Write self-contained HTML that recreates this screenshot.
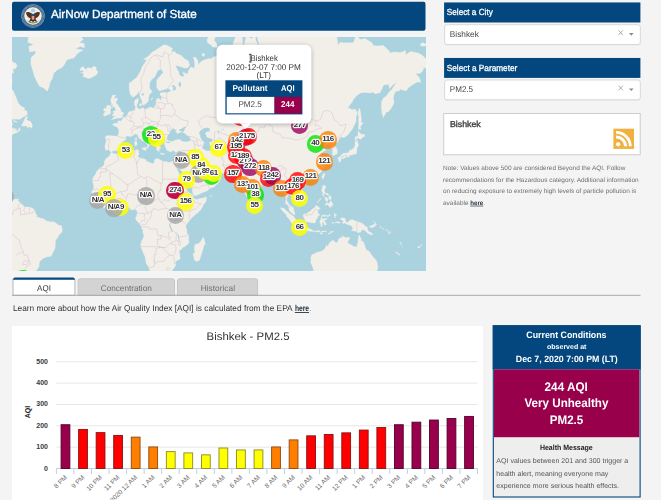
<!DOCTYPE html>
<html><head><meta charset="utf-8"><title>AirNow Department of State</title>
<style>
*{box-sizing:border-box;margin:0;padding:0}
html,body{width:661px;height:500px;overflow:hidden;background:#f4f4f4;font-family:"Liberation Sans",sans-serif;color:#333}
.abs{position:absolute}
svg.txt{filter:blur(.28px)}
svg.txt text{font-family:"Liberation Sans",sans-serif;text-rendering:geometricPrecision;white-space:pre}
#hdr{left:12px;top:1.8px;width:413.6px;height:29px}
#map{left:12px;top:37px;width:413.5px;height:234.3px;background:#aad3df;overflow:hidden}
#map svg.land{position:absolute;left:0;top:0;filter:blur(.35px)}
.mk{position:absolute;width:17.4px;height:17.4px;border-radius:50%;display:block}
.ml{position:absolute;width:30px;height:10px;text-align:center;font-size:8px;line-height:10px;font-weight:bold;color:#333;letter-spacing:-.5px;white-space:nowrap;text-shadow:0.0px 0.0px .7px #fff,1.0px 0.0px .7px #fff,-1.0px 0.0px .7px #fff,0.0px 1.0px .7px #fff,0.0px -1.0px .7px #fff,0.8px 0.8px .7px #fff,-0.8px -0.8px .7px #fff,0.8px -0.8px .7px #fff,-0.8px 0.8px .7px #fff,1.3px 0.0px 1px #fff,-1.3px 0.0px 1px #fff,0.0px 1.2px 1px #fff,0.0px -1.2px 1px #fff,0 0 1.5px #fff}
#popsh{left:217px;top:45px;width:94px;height:78px;border-radius:6px;box-shadow:0 1px 5px rgba(0,0,0,.32)}
#tip{left:239.8px;top:123.3px;width:0;height:0;border-left:5.7px solid transparent;border-right:5.7px solid transparent;border-top:5.6px solid #fff}
.sh{left:444.1px;width:196.4px;height:20.1px;background:#03477e}
.sel{left:444.1px;width:196.7px;height:20.8px;background:#fff;border:1px solid #d2d2d2;border-radius:2.5px;box-shadow:0 .5px 1px rgba(0,0,0,.1)}
.sel .x{position:absolute;left:172.6px;top:-.8px;font-size:9px;line-height:19px;color:#8a8f96}
.sel .a{position:absolute;left:184.3px;top:8.5px;width:0;height:0;border-left:2.7px solid transparent;border-right:2.7px solid transparent;border-top:3px solid #7c7c7c}
#city{left:443.2px;top:113px;width:197.5px;height:42.4px;background:#fff;border:1px solid #cdcdcd}
.tab{top:278.2px;height:17.6px;background:#d3d3d3;border:1px solid #c6c6c6;border-bottom:none;border-radius:3px 3px 0 0}
#tabline{left:12px;top:295px;width:628.5px;height:1px;background:#a9a9a9}
svg.chart{position:absolute;left:12px;top:325.5px}
svg.chart text{font-family:"Liberation Sans",sans-serif}
.yl{font-size:7px;font-weight:bold;fill:#3a3a3a}
.xl{font-size:6.6px;fill:#6c6c6c}
.yt{font-size:7px;font-weight:bold;fill:#222}
#cc{left:492.6px;top:325.2px;width:148px;height:172.4px;background:#eee;border:1px solid #03477e;border-left-width:1.4px}
#cc .b1{position:absolute;left:0;top:0;width:100%;height:44px;background:#03477e}
#cc .b2{position:absolute;left:0;top:43.6px;width:100%;height:67.8px;background:#99004c}
</style></head><body>

<svg class="abs" style="left:0;top:0" width="661" height="40" viewBox="0 0 661 40"><rect x="12" y="1.7" width="413.5" height="29.15" rx="2" fill="#03477e"/></svg>
<div id="hdr" class="abs">
<svg class="abs" style="left:9.2px;top:2.2px" width="24" height="24" viewBox="-12 -12 24 24">
<circle r="11.75" fill="#b9a75a"/><circle r="11.25" fill="#2d62b0"/><circle r="10.1" fill="none" stroke="#8fa9d4" stroke-width="1.1" stroke-dasharray=".7 .6"/>
<circle r="8.9" fill="#c4b35f"/><circle r="8.5" fill="#f1efe4"/>
<circle cx="0" cy="-5.3" r="2.1" fill="#a9cdea"/>
<path d="M-7,-3.4 C-5.6,-4.6 -3.2,-4.2 -1.2,-2.4 L0,-3.4 L1.2,-2.4 C3.2,-4.2 5.6,-4.6 7,-3.4 C6.8,-0.6 5,1.6 2.4,2.6 L4.2,6 L1.2,5 L0,6.6 L-1.2,5 L-4.2,6 L-2.4,2.6 C-5,1.6 -6.8,-0.6 -7,-3.4Z" fill="#4e3722"/>
<path d="M-6.3,4.2 C-4.5,6.6 -2,7.4 0,7.4 C2,7.4 4.5,6.6 6.3,4.2 C4.5,5.8 2,6.4 0,6.4 C-2,6.4 -4.5,5.8 -6.3,4.2Z" fill="#4d8a4a"/>
<rect x="-1.7" y="-1.4" width="3.4" height="1.5" fill="#2b4a9b"/><path d="M-1.7,0.1 H1.7 V2.2 C1.7,3.2 0.8,3.8 0,4.1 C-0.8,3.8 -1.7,3.2 -1.7,2.2Z" fill="#d0444c"/>
<rect x="-0.9" y="0.1" width="0.5" height="3.4" fill="#f3efe6"/><rect x="0.4" y="0.1" width="0.5" height="3.4" fill="#f3efe6"/>
<circle cx="0" cy="-2.9" r="1.05" fill="#f6f3ea"/>
</svg>
</div>

<div id="map" class="abs">
<svg class="land" width="413.5" height="234.3" viewBox="0 0 413.5 234.3">
<path d="M99.3,115.3L98.1,114.3L97.0,112.8L93.6,113.2L92.8,109.6L94.1,104.1L93.1,100.1L95.3,98.5L99.2,98.7L102.3,98.9L105.7,99.2L106.7,96.1L106.7,92.5L105.0,89.9L101.3,88.6L100.7,87.1L103.7,86.1L105.4,86.6L106.0,84.0L106.5,83.8L108.9,84.3L111.7,80.6L113.6,79.8L115.4,77.7L116.6,74.9L120.3,73.8L122.9,73.2L123.3,72.4L123.1,69.5L122.3,67.5L122.3,64.8L123.1,62.9L126.5,61.1L126.1,64.8L125.8,66.0L124.8,67.8L125.3,69.8L125.8,71.0L127.0,72.3L129.0,71.7L131.1,70.4L132.7,72.4L135.5,71.4L138.8,69.8L140.0,71.0L142.0,70.7L144.0,67.2L143.9,64.8L144.7,62.0L146.6,60.9L148.2,63.2L149.1,63.1L149.7,59.0L148.1,58.2L148.1,56.3L150.2,55.4L155.6,55.4L159.3,53.9L156.8,51.6L153.8,52.1L150.6,53.1L147.2,54.1L145.9,52.3L144.5,49.9L144.9,42.7L147.4,39.9L151.2,35.4L149.7,32.2L145.9,33.2L144.4,36.6L142.7,40.1L140.0,42.3L137.8,45.3L137.5,51.2L140.2,54.3L139.0,55.9L137.2,57.9L136.7,61.1L136.2,64.5L134.8,65.8L132.7,67.6L130.8,68.2L130.5,67.5L130.0,66.1L130.1,64.3L128.6,61.1L127.5,57.2L126.6,53.9L126.0,56.3L125.4,56.9L122.1,59.8L120.5,60.1L118.1,57.1L117.4,52.3L117.1,50.2L117.2,46.0L119.1,44.9L121.6,42.7L124.6,40.5L126.6,37.4L128.8,33.4L130.3,29.3L132.8,25.9L134.7,22.8L131.3,22.4L136.3,19.2L140.4,14.9L143.9,13.0L148.4,10.0L151.9,7.7L155.6,8.4L160.6,11.5L159.1,14.9L162.3,14.4L164.8,16.8L169.0,18.2L172.3,21.5L176.5,24.1L177.7,28.0L175.7,31.0L172.3,31.0L167.3,29.3L164.0,28.5L163.0,26.8L164.8,31.4L167.0,35.4L167.0,37.4L169.8,39.7L172.3,39.3L170.7,35.0L173.2,36.2L175.7,37.0L176.5,33.4L179.1,29.7L182.4,31.4L182.7,27.2L182.1,22.8L181.1,20.1L184.1,20.5L185.8,23.7L186.6,27.6L189.1,24.6L192.4,22.8L197.5,21.5L199.2,21.9L200.8,20.1L205.9,18.7L209.2,21.0L210.0,15.9L209.5,13.5L215.9,16.8L220.1,18.7L222.6,21.0L224.3,18.7L220.9,15.4L220.6,11.0L221.3,5.8L223.4,0.4L225.1,-2.4L230.1,-1.3L230.8,7.4L230.3,15.9L231.6,15.9L232.1,7.4L234.3,-1.3L239.4,1.5L243.5,-1.8L243.7,3.2L247.7,10.5L248.6,10.5L246.1,4.2L244.4,-5.3L254.4,-14.6L276.2,-24.8L282.9,-33.8L296.3,-24.8L298.0,-8.3L292.9,-7.7L287.1,-3.0L288.8,-2.4L298.8,-5.3L299.7,-5.9L309.7,-2.4L316.4,-5.9L321.4,-5.3L324.8,0.4L326.4,8.4L328.1,5.3L331.5,5.8L336.5,5.8L341.5,5.8L343.2,0.4L344.9,-1.3L348.2,2.6L353.2,1.5L359.9,5.8L361.6,8.4L365.0,8.9L371.7,8.4L376.7,13.5L378.4,15.9L381.7,14.9L388.4,15.4L393.4,13.5L394.0,18.2L395.1,16.8L398.5,14.4L403.5,15.4L406.9,16.3L410.2,18.2L415.2,22.8L418.6,25.9L423.6,27.2L427.5,31.0L425.3,33.4L421.9,37.8L416.9,33.8L411.9,30.1L411.0,33.4L408.5,36.2L406.0,36.6L403.5,36.2L407.7,41.2L408.9,45.3L405.2,44.9L401.0,47.4L396.8,50.6L394.0,53.9L388.4,52.3L386.8,54.3L384.2,53.9L382.2,56.9L381.4,60.7L382.1,65.7L380.2,69.8L376.7,74.4L374.5,74.9L371.2,80.6L370.0,76.3L369.3,70.7L369.5,64.8L371.3,61.1L374.2,59.2L376.4,55.9L379.9,52.3L382.9,47.8L384.4,44.9L380.9,48.1L377.4,51.6L376.7,47.4L371.7,48.1L368.3,55.6L363.3,56.9L361.3,55.3L357.4,55.9L352.4,55.6L348.6,55.9L344.9,58.5L341.5,62.3L340.2,65.1L336.5,69.8L335.7,70.4L339.0,72.1L339.9,72.7L343.2,72.1L344.4,74.6L345.4,74.4L344.9,77.7L344.0,80.4L344.0,84.3L343.7,85.6L341.5,89.4L340.7,91.8L338.2,94.7L336.0,97.8L333.2,100.1L331.3,100.5L329.6,99.8L327.6,101.7L326.1,103.2L325.9,105.0L323.1,106.8L322.4,107.2L322.2,108.5L323.8,110.0L324.9,111.7L325.4,114.3L325.4,115.3L324.9,117.1L323.1,117.8L320.6,118.6L320.3,117.8L320.6,115.3L320.3,113.6L320.8,112.2L318.9,111.5L317.9,110.7L318.6,109.6L318.1,107.9L317.1,107.0L314.7,107.7L312.4,109.2L311.7,107.9L313.4,105.5L311.4,104.8L309.0,107.0L306.0,109.0L306.4,110.7L308.0,111.5L308.0,112.8L310.2,111.9L312.0,111.9L313.9,112.4L313.7,113.4L310.4,115.1L308.5,117.1L308.5,118.0L310.2,119.4L311.2,121.8L312.9,124.0L312.9,125.5L311.2,126.5L312.9,127.5L312.4,130.2L311.2,131.1L309.0,134.9L306.5,137.7L304.2,139.9L300.0,141.7L298.8,142.0L295.8,142.9L293.6,143.7L293.3,145.3L292.4,144.0L291.4,143.1L289.6,142.9L287.6,144.4L285.9,147.0L285.9,148.1L287.3,150.2L289.1,152.0L290.1,152.7L291.3,155.4L291.8,156.7L291.9,158.7L291.6,159.9L289.8,161.6L288.1,162.6L287.4,163.8L284.2,165.5L284.4,163.5L284.7,163.2L283.7,162.5L282.1,162.1L281.2,160.6L280.4,159.4L278.4,158.6L277.7,157.3L277.0,157.0L276.2,157.5L276.0,158.9L275.9,160.1L274.9,162.3L275.0,164.4L276.2,165.7L277.2,167.9L278.4,168.4L280.1,169.6L281.6,171.1L281.9,173.6L282.7,176.0L283.2,177.7L282.6,177.8L281.9,177.7L279.9,176.3L278.4,175.0L277.2,173.0L276.7,170.9L276.4,169.1L275.9,168.4L275.0,167.4L273.4,166.6L273.4,164.9L273.9,163.2L273.9,159.1L273.0,156.3L272.2,154.1L272.2,152.0L271.2,151.1L270.0,152.0L268.3,153.2L266.7,152.8L267.0,150.2L266.7,148.5L265.6,146.7L264.3,145.6L262.8,143.3L262.5,141.7L260.8,141.3L259.4,142.4L257.8,142.8L256.9,142.9L256.1,142.4L254.4,143.3L253.9,145.3L252.4,146.2L251.1,147.0L248.2,149.9L246.6,151.3L244.5,152.8L243.2,153.7L242.9,155.6L243.2,157.9L242.4,159.9L242.4,162.7L241.0,164.4L239.7,165.2L238.6,166.4L237.5,165.7L236.3,163.3L235.7,161.0L234.0,158.2L232.3,153.9L231.5,151.1L230.6,147.8L230.5,145.8L230.5,143.8L230.1,141.8L229.6,142.6L227.6,144.4L226.6,144.2L225.3,142.9L224.3,141.8L226.3,140.6L224.8,140.8L223.1,139.3L221.8,138.8L220.8,137.1L220.1,136.0L216.9,136.4L213.1,136.5L210.2,136.2L205.5,135.5L204.2,133.9L203.0,132.7L200.7,133.8L196.8,132.1L193.8,129.4L192.8,127.3L191.1,126.5L190.1,127.4L189.1,128.4L189.8,130.0L190.4,131.7L191.9,133.0L192.7,134.0L192.8,135.4L193.8,137.1L193.8,135.6L194.5,134.7L195.1,136.2L195.1,137.5L194.6,138.0L196.8,138.2L199.8,137.7L201.3,136.2L202.5,135.2L203.2,134.3L203.1,136.5L203.8,137.9L206.9,139.3L208.9,141.3L208.0,143.3L206.9,145.1L205.5,147.6L205.3,146.4L204.2,147.8L203.0,149.5L201.2,150.2L199.2,151.1L196.1,152.5L196.1,153.5L190.9,155.4L188.3,156.8L184.1,158.4L181.6,158.6L181.1,157.5L180.6,154.9L180.2,152.8L180.0,151.3L177.5,147.4L175.7,145.3L174.3,143.1L172.4,138.4L171.0,136.2L169.8,134.5L168.2,132.1L166.7,131.1L167.3,128.2L166.2,131.6L165.0,130.5L164.0,129.2L163.2,127.4L162.8,124.8L165.3,125.0L166.3,124.4L166.9,123.3L167.3,121.8L168.2,119.6L168.7,118.5L168.7,116.3L169.3,114.0L168.2,114.0L166.7,113.6L165.1,115.0L163.6,115.2L162.3,114.1L160.1,113.5L159.8,114.7L157.6,114.7L156.0,113.6L154.6,113.2L154.3,111.9L153.8,110.2L152.8,110.5L153.8,109.0L152.4,107.9L152.6,106.8L152.3,105.2L152.1,104.9L149.6,104.8L149.4,106.5L148.4,106.9L147.7,106.2L147.1,105.5L146.6,106.8L147.2,108.3L147.7,109.2L148.9,110.7L149.0,111.7L148.2,111.2L147.2,111.3L147.6,112.4L146.7,112.2L147.4,114.4L146.4,114.5L145.7,113.2L145.0,113.6L144.4,111.8L145.0,110.6L144.0,110.3L143.5,109.1L142.5,107.7L142.2,107.1L141.3,105.8L141.3,103.9L141.2,102.7L140.7,102.1L139.0,100.9L136.3,98.9L134.2,97.5L133.7,95.4L132.9,94.7L131.9,95.8L131.4,94.2L131.7,93.9L130.6,93.9L129.4,94.5L129.6,95.7L129.3,96.8L129.8,97.6L131.3,98.7L132.5,101.3L135.8,102.6L135.3,103.5L136.9,104.4L138.8,105.4L139.7,106.5L139.4,107.2L138.8,106.7L137.5,105.8L136.5,107.2L137.4,108.7L136.4,109.7L135.7,111.2L134.9,110.9L135.2,109.7L135.8,109.0L135.0,106.8L133.4,105.4L132.6,104.9L131.4,104.1L129.8,103.6L128.5,102.1L127.3,101.4L126.3,100.2L126.0,98.8L125.1,97.5L123.6,96.8L122.9,97.1L122.1,98.0L120.9,98.5L118.6,99.8L117.7,99.4L116.4,99.2L115.2,98.8L113.9,99.8L113.8,101.2L114.2,101.7L112.4,103.7L110.8,104.4L110.1,105.2L108.7,106.9L108.2,108.0L109.0,109.5L107.9,110.3L107.0,111.9L105.0,113.8L104.6,113.5L102.8,113.8L101.3,113.8L99.7,115.0ZM98.8,115.7L99.8,115.5L102.2,116.8L103.8,116.7L105.4,117.1L107.6,115.9L108.9,115.3L110.9,114.3L113.8,113.6L115.4,113.4L117.2,113.7L118.3,113.6L120.3,113.4L121.7,113.4L123.1,113.3L125.2,112.6L126.0,113.5L127.2,113.1L126.5,114.5L126.5,115.7L127.2,116.3L126.7,118.0L125.6,119.6L127.3,120.4L128.0,121.1L130.8,121.6L132.7,122.2L134.0,122.6L134.5,124.4L136.5,124.9L138.8,125.9L140.9,126.8L142.4,125.3L142.3,123.2L143.5,122.1L144.9,121.6L146.6,121.9L148.9,123.2L150.7,123.9L150.8,124.3L154.3,124.7L157.2,125.6L158.8,124.9L159.6,124.5L160.6,124.2L162.0,124.4L162.8,124.8L163.2,127.4L162.9,128.1L163.4,129.0L164.1,130.4L165.3,132.5L165.6,133.5L166.2,134.7L167.2,136.6L168.2,138.8L168.3,140.4L170.1,141.8L171.0,144.0L171.0,146.5L171.3,147.4L173.4,149.3L174.8,153.5L176.0,154.8L178.5,156.5L180.3,158.0L181.2,158.9L181.0,160.4L181.5,160.9L184.1,162.4L186.6,161.9L188.3,161.3L191.1,160.9L193.8,159.9L194.6,160.0L194.3,162.4L194.0,164.0L193.3,165.7L192.2,166.6L191.1,168.6L190.0,171.0L188.3,173.3L186.6,175.1L184.7,176.6L183.7,177.2L181.6,179.2L180.0,180.6L178.4,182.8L177.2,183.9L175.9,185.4L175.1,186.8L174.2,188.5L173.7,190.1L174.5,191.4L174.9,193.3L174.9,195.0L175.2,196.8L176.0,197.3L176.8,198.0L176.6,202.0L176.9,204.6L177.0,205.5L175.5,207.6L173.2,209.3L170.7,210.5L169.5,212.2L167.1,213.9L167.3,215.5L167.8,217.8L168.2,221.2L167.7,222.3L165.1,223.5L163.3,225.0L163.8,226.7L163.1,229.6L162.5,230.4L160.7,232.4L159.3,234.8L155.4,238.6L151.7,240.6L142.2,242.2L139.5,241.3L138.7,238.6L139.4,236.8L138.0,233.7L136.9,231.3L136.3,230.0L134.1,226.3L133.7,223.3L133.0,219.5L131.1,215.5L130.0,212.4L128.4,209.3L129.1,205.8L129.6,203.7L131.1,201.3L131.4,200.8L131.9,198.9L130.8,194.8L131.1,192.6L130.2,192.2L129.3,190.2L129.1,189.3L128.5,188.0L126.5,185.7L124.3,183.2L123.4,181.2L124.5,179.3L124.8,178.3L125.0,176.9L125.3,175.1L124.9,173.3L123.8,173.3L123.6,172.3L122.6,172.4L120.4,172.7L118.9,172.8L117.7,171.3L117.1,170.3L114.4,169.3L112.7,169.3L110.7,169.8L108.4,170.7L105.2,172.0L102.0,171.2L98.5,171.7L95.8,172.7L93.5,171.6L90.6,169.4L89.4,168.4L87.8,167.6L86.5,165.7L85.8,164.0L84.2,162.3L83.4,161.5L81.9,160.1L80.6,159.1L80.9,157.3L80.6,156.3L79.4,155.1L80.4,153.7L81.1,152.8L81.9,149.2L81.0,146.9L81.1,144.7L80.1,144.4L80.4,142.9L82.0,139.1L83.7,137.3L84.4,134.7L86.3,132.8L87.0,131.2L89.7,130.2L91.6,128.4L92.5,126.5L92.1,126.0L92.3,124.4L93.2,122.8L94.5,120.9L96.0,120.2L97.2,119.3L97.6,118.8L98.4,116.9ZM99.2,82.9L101.7,82.1L102.8,82.0L103.7,81.2L104.6,81.6L106.5,81.0L108.5,80.9L110.3,80.6L111.0,80.0L111.0,79.4L109.5,79.0L110.4,78.2L111.4,77.4L111.6,76.3L110.9,75.1L109.2,75.2L109.3,74.4L108.9,73.2L108.5,71.8L107.7,70.7L106.4,69.2L105.4,66.9L103.7,66.3L104.3,65.4L104.0,64.8L105.3,62.8L105.7,61.7L105.4,61.1L102.0,61.4L102.2,60.4L103.6,58.7L103.6,58.0L100.3,58.2L99.8,60.1L99.0,61.7L98.9,63.2L98.3,64.2L99.5,65.1L99.3,68.3L100.5,67.2L100.9,67.9L100.2,69.5L100.6,70.2L102.8,69.5L103.0,70.7L103.3,71.8L103.6,72.7L103.7,73.8L103.2,74.0L101.0,74.1L101.5,74.9L100.7,75.5L101.8,75.2L101.8,76.6L100.8,77.4L99.8,78.0L100.2,78.6L102.1,78.8L103.4,79.2L104.2,78.8L104.1,79.0L103.5,79.8L101.8,79.8L101.1,80.9L100.2,82.0ZM96.3,68.2L98.5,68.6L99.2,70.2L99.6,71.1L98.1,72.1L98.5,74.0L98.7,75.1L98.1,77.2L97.0,77.3L94.8,78.2L92.3,79.2L91.4,78.1L91.2,77.4L92.1,76.2L93.6,74.5L91.6,73.8L91.8,72.1L92.1,71.3L94.3,71.3L95.0,70.4L94.0,70.1L94.8,68.8ZM67.7,33.4L68.8,31.0L70.8,29.5L73.0,31.8L74.7,33.0L74.9,31.0L77.7,30.8L79.4,31.4L81.4,29.3L84.1,30.1L84.2,33.0L85.9,34.6L85.2,37.0L83.2,38.5L80.2,40.3L77.2,41.6L74.7,41.0L72.7,39.9L70.7,39.9L71.8,38.2L71.3,36.2L68.5,36.0L71.8,35.0L71.0,33.6ZM35.2,54.3L31.7,50.9L27.5,49.2L25.0,44.9L22.4,39.3L20.8,33.4L18.8,27.2L19.1,20.5L23.3,16.8L23.6,13.9L17.4,14.9L16.9,9.5L21.6,7.4L15.7,5.3L16.6,-1.3L14.1,-8.3L10.7,-17.9L4.8,-22.7L-5.2,-21.3L-11.9,-36.2L8.2,-75.3L58.5,-95.3L78.5,-64.0L76.9,-36.2L76.0,-14.6L72.7,-8.3L71.0,-3.6L67.7,-1.3L71.3,2.1L67.7,5.8L72.2,6.4L72.4,11.0L68.5,9.5L63.5,11.5L70.2,13.0L71.3,13.0L66.0,15.9L61.8,21.0L55.1,22.8L52.6,27.2L50.1,30.6L45.9,32.6L41.7,36.2L40.5,41.2L38.3,44.9L37.0,50.2ZM205.0,10.5L200.8,10.0L198.3,7.4L195.5,5.8L195.1,2.6L197.5,-2.4L200.0,-5.9L202.5,-11.4L206.7,-17.9L214.2,-23.4L222.6,-28.5L224.3,-24.8L217.6,-19.9L210.9,-14.6L206.7,-8.3L204.2,-2.4L202.2,3.2L205.0,7.4ZM189.6,18.2L191.3,15.9L193.0,17.8L191.6,19.6ZM407.9,7.9L410.2,5.6L413.9,6.9L413.6,8.9L410.2,9.2ZM129.6,111.5L131.1,110.7L134.8,110.5L134.0,112.2L134.1,113.8L132.5,113.1L130.3,112.0ZM122.4,104.8L124.1,104.0L125.1,105.7L124.8,108.5L123.9,108.5L122.8,109.1L122.8,107.0L122.4,105.5ZM124.4,100.1L124.7,102.1L124.1,103.7L123.1,102.6L123.1,101.4L124.3,100.8ZM148.1,116.2L149.2,116.1L150.9,116.6L152.8,116.7L152.6,117.3L150.2,117.4L148.1,116.8ZM162.8,117.2L163.8,116.5L165.1,116.5L166.7,115.9L165.7,117.3L164.0,118.2L163.0,117.9ZM242.5,163.5L244.2,165.0L244.7,165.5L245.8,167.6L245.5,169.1L243.7,170.0L242.9,169.8L242.4,168.3L242.3,166.2L242.5,164.9ZM290.8,147.2L292.1,145.8L294.0,145.6L294.6,146.5L293.8,147.9L292.3,149.0L290.8,148.5ZM312.3,136.2L313.1,136.7L312.4,138.6L311.2,142.2L310.0,140.8L309.9,139.3L311.2,137.1ZM328.0,119.5L329.3,120.2L329.6,121.6L328.8,123.8L328.3,124.8L327.6,125.3L326.8,124.8L326.8,123.0L326.1,122.0L325.8,120.8L327.1,120.2ZM330.0,120.6L331.0,119.5L333.2,118.7L334.3,119.4L334.4,119.8L333.5,120.9L332.3,120.4L331.5,121.9L330.5,121.4ZM328.0,119.4L328.8,118.5L330.8,116.4L331.6,116.2L333.5,116.2L335.2,115.8L336.6,116.0L336.7,114.7L337.7,113.4L338.7,112.2L338.2,113.6L338.5,113.7L341.5,111.2L342.4,110.0L342.9,109.2L343.2,107.4L342.9,105.5L343.8,104.0L344.5,104.9L344.9,103.5L345.6,103.7L345.8,105.6L346.6,107.7L345.7,110.5L345.0,110.6L344.9,113.2L344.6,115.9L343.9,117.0L342.9,117.6L342.9,116.1L342.6,117.0L341.8,116.8L341.3,118.2L340.8,117.1L340.2,118.2L339.3,118.1L338.2,118.2L337.9,117.2L337.4,118.2L338.0,118.9L336.9,119.6L336.1,120.5L335.0,119.4L335.1,118.9L335.5,118.1L335.2,118.0L333.1,118.3L330.6,118.7L329.5,119.4ZM343.4,103.7L344.8,102.9L343.9,101.2L344.9,101.7L345.9,101.0L348.6,102.5L350.6,100.2L352.9,99.3L352.1,97.1L350.4,97.6L348.8,96.9L346.5,94.2L346.0,94.5L346.1,96.6L346.0,97.9L345.5,99.5L343.8,99.3L342.9,101.0L342.9,102.1ZM347.6,71.0L348.2,73.5L348.7,76.3L349.2,80.4L349.6,83.0L348.6,85.1L351.1,85.8L348.2,89.9L348.9,91.6L348.9,92.8L347.9,91.4L346.6,93.3L346.4,90.6L346.7,86.9L346.6,83.5L346.8,80.6L346.0,77.1L346.4,73.8ZM310.7,148.5L313.4,148.5L313.7,150.6L312.4,153.0L312.5,155.1L313.6,156.1L316.2,156.7L316.7,158.8L315.2,158.0L313.9,157.0L312.9,156.5L311.4,156.9L310.7,156.0L311.3,155.4L310.5,155.5L309.5,153.2L310.1,152.8L309.4,152.3L310.3,151.8L310.3,150.0ZM310.4,157.3L311.7,157.3L312.2,158.7L311.5,159.4L310.9,158.4ZM316.9,158.9L318.6,158.8L319.3,161.3L318.4,162.7L318.1,163.2L317.7,162.8L317.1,161.6L316.9,160.6ZM312.9,159.9L314.9,160.5L314.1,162.4L313.0,162.4L313.1,160.9ZM314.5,161.6L315.6,161.6L316.5,161.0L315.4,164.0L315.2,164.8L313.7,163.7L313.8,162.5ZM318.7,163.5L320.3,165.7L320.8,167.7L320.1,169.4L319.2,168.4L318.7,170.6L316.7,169.6L316.6,167.9L315.4,167.6L313.1,168.4L313.2,166.9L315.2,165.5L316.1,166.4L316.7,166.2L317.5,165.7L318.1,164.9ZM308.9,160.9L308.5,162.3L307.6,163.6L305.0,166.0L305.5,165.0L307.2,163.2L308.4,161.1ZM292.4,176.6L293.6,177.2L295.3,176.0L298.0,174.6L299.7,172.6L301.3,171.6L303.1,169.9L304.3,168.2L305.8,169.3L306.5,170.2L308.4,171.3L306.2,172.9L305.7,174.5L306.4,176.3L308.0,178.3L306.2,178.7L305.5,181.0L304.3,182.2L303.8,184.2L303.0,186.0L300.5,185.9L298.0,185.4L295.8,184.9L293.3,184.9L292.9,183.1L291.6,180.0L291.1,178.0ZM268.3,170.7L272.0,171.2L273.4,172.6L274.0,173.6L276.0,175.0L277.5,176.5L278.6,177.2L279.9,178.3L281.9,179.2L282.6,181.5L283.6,181.7L284.4,183.9L285.6,184.0L286.2,185.0L286.0,187.0L286.0,189.7L285.1,189.2L283.4,189.2L280.0,186.4L276.8,181.6L274.7,179.5L274.1,177.1L272.4,176.1L269.7,173.0ZM284.9,191.4L286.2,189.9L287.6,190.2L290.1,190.6L290.6,191.2L293.6,191.7L294.6,190.7L297.3,191.6L300.4,193.0L300.3,193.8L300.5,194.7L297.5,194.1L294.1,193.8L291.3,193.0L290.4,193.1L287.1,192.4L287.1,191.8ZM300.5,193.6L302.5,193.8L301.7,194.8L300.7,194.1ZM303.0,194.1L304.2,194.0L303.8,195.0L302.8,194.8ZM304.3,194.1L306.4,193.6L308.4,194.1L308.0,194.8L306.0,195.0L304.3,195.1ZM309.5,194.1L312.2,194.1L314.7,193.8L314.4,194.6L311.4,195.0L309.5,194.8ZM308.0,195.8L309.7,195.6L311.0,196.8L309.7,197.2L308.2,196.5ZM315.6,197.3L317.2,195.5L319.8,194.3L321.9,194.1L320.6,195.1L318.1,196.5L316.4,197.3ZM309.4,181.2L309.4,179.7L309.9,178.7L311.1,177.8L312.2,178.2L314.4,178.4L316.4,178.4L317.9,177.2L318.5,177.6L317.2,179.2L315.2,179.5L314.8,179.2L312.2,179.2L310.2,179.2L309.8,180.7L310.7,181.7L311.0,182.3L312.4,181.5L314.4,181.4L315.5,181.4L314.4,182.7L313.1,182.8L312.2,183.4L312.9,184.7L313.9,185.5L314.1,186.7L314.6,187.4L313.7,188.0L312.4,188.0L312.4,186.8L311.2,185.7L311.1,184.4L310.0,185.0L310.4,186.7L310.3,188.4L310.5,189.4L308.9,189.4L308.7,188.6L309.0,186.7L307.9,186.0L307.8,184.4L308.5,182.7L308.9,181.4ZM322.3,176.5L323.1,176.3L322.9,178.0L324.3,177.5L324.3,178.7L323.1,179.3L323.8,181.3L322.8,180.5L322.4,178.5ZM322.9,185.4L324.8,184.7L327.8,185.0L327.8,186.4L325.6,185.7L323.1,185.9ZM319.8,185.4L321.8,185.4L321.8,186.4L319.9,186.2ZM328.5,181.4L330.5,180.7L333.3,181.4L333.5,183.4L334.2,185.5L335.7,185.6L337.3,183.7L339.7,182.5L341.1,183.1L344.4,184.3L345.4,184.5L349.3,186.0L350.7,186.5L352.9,188.7L354.6,189.9L356.3,190.9L354.9,191.3L356.1,193.4L357.4,195.1L358.8,195.1L359.9,196.8L361.4,197.3L359.9,197.9L357.4,197.2L355.3,196.0L353.2,193.6L351.2,192.9L350.3,192.6L349.2,194.0L348.6,195.3L346.7,195.5L344.9,195.3L343.9,194.3L341.5,193.8L339.3,194.1L340.5,192.3L340.9,191.4L339.9,189.2L337.8,188.1L335.2,187.5L332.6,186.1L331.1,186.7L330.3,184.9L332.8,184.0L330.6,183.7L329.6,182.7L328.0,182.3ZM357.1,189.2L359.9,188.4L362.5,187.0L363.8,187.0L363.3,188.9L360.8,190.4L358.3,190.4ZM361.3,184.4L363.3,185.5L365.0,187.7L364.3,187.4L362.5,185.4ZM302.5,236.6L300.7,230.4L299.9,228.3L298.6,225.5L299.1,223.1L298.6,221.4L299.9,217.4L301.5,217.2L304.3,215.5L307.4,214.7L309.7,214.0L312.2,212.4L313.4,210.7L314.6,207.9L315.7,209.4L316.4,207.7L317.4,205.9L319.6,204.0L321.3,203.3L322.8,204.6L323.3,205.8L325.8,205.2L326.1,203.3L326.8,201.8L327.9,201.0L330.8,200.4L329.8,198.8L332.3,199.9L334.8,200.6L336.5,200.2L337.8,200.6L337.3,202.3L336.3,203.7L335.5,205.1L336.5,206.5L339.3,207.9L342.4,209.8L344.5,209.8L345.5,207.2L345.9,204.6L346.3,201.4L346.7,199.1L347.4,198.0L348.1,199.9L349.1,201.6L349.2,203.7L349.9,204.4L350.7,204.0L352.1,206.3L352.9,208.7L353.4,210.7L354.6,212.9L357.0,214.2L358.6,216.3L359.8,218.3L361.5,220.5L362.1,221.2L364.0,222.9L365.1,224.8L365.3,227.8L365.8,229.1L366.1,230.1L365.1,233.3L364.8,235.6L363.0,238.4L361.6,244.7L301.3,244.7ZM191.3,200.2L192.4,202.7L193.3,207.0L191.8,208.7L191.4,210.9L190.4,214.2L189.1,218.2L188.1,221.4L187.4,223.4L184.4,224.4L182.4,223.3L181.8,220.2L181.1,217.4L182.9,214.7L182.4,212.4L182.4,208.9L183.2,207.5L186.3,206.6L187.8,205.4L188.9,204.2L189.6,202.8L190.6,200.9ZM198.0,158.6L200.0,158.8L199.2,159.2L198.1,159.1ZM127.5,67.2L128.8,66.0L129.8,67.2L129.0,69.2L127.5,68.6ZM139.2,62.6L140.5,60.4L140.2,62.0L139.4,63.4ZM383.4,214.4L385.9,216.0L388.4,218.3L387.6,218.3L384.7,216.3ZM367.7,189.1L369.2,190.1L369.8,191.4L368.7,190.9ZM405.7,209.6L407.9,209.8L407.9,211.0L405.8,210.8ZM407.9,208.6L410.2,207.5L410.0,208.4L408.4,208.9ZM387.8,205.1L388.8,205.4L388.8,206.6L387.9,206.3ZM388.9,207.2L389.8,207.5L389.6,208.2L388.9,207.9ZM390.4,209.8L391.1,210.0L390.8,210.5ZM376.0,195.6L378.0,196.2L377.7,196.8L376.2,196.5ZM377.7,194.1L378.9,195.5L378.4,196.0L377.7,195.0ZM374.2,192.6L376.4,194.0L375.9,194.3L374.0,193.1ZM370.8,191.2L372.5,192.3L371.8,192.4L370.7,191.6ZM-16.9,161.5L-11.9,159.4L-10.7,161.5L-10.2,159.8L-8.5,159.2L-5.9,161.1L-1.8,162.1L0.7,162.8L3.2,162.0L4.8,162.1L6.5,164.0L8.2,165.7L10.7,167.9L12.9,169.9L16.6,170.1L18.2,170.3L20.8,171.4L22.4,172.8L23.8,176.6L25.0,178.5L24.4,180.0L27.5,180.5L28.3,181.2L31.7,181.8L34.2,183.7L35.8,184.2L39.2,184.9L41.7,184.7L44.2,186.2L46.4,188.0L49.6,188.7L50.2,191.8L50.2,194.0L49.2,196.0L46.7,198.5L45.2,201.6L43.5,202.8L43.4,206.3L43.2,210.3L42.2,213.3L40.9,215.6L40.0,217.8L38.3,219.5L35.0,219.8L31.1,221.4L28.3,223.8L27.3,226.1L27.1,229.5L25.0,232.7L21.6,236.6L19.1,240.6L11.5,244.7L-16.9,244.7ZM-16.9,46.7L-11.9,48.5L-8.5,50.2L-7.7,56.9L-4.4,59.2L-1.8,56.9L0.7,52.6L3.2,58.2L5.2,63.2L6.5,66.3L9.0,69.2L12.4,70.7L12.7,73.5L14.9,74.1L15.4,77.1L13.4,79.0L10.2,80.4L8.2,82.2L3.2,82.2L-2.7,82.5L-5.2,85.6L-0.2,85.1L1.0,86.9L-1.0,88.6L0.2,90.6L1.5,92.8L5.2,93.7L6.5,94.9L2.3,96.4L-1.5,98.7L-2.2,97.1L0.7,94.5L-3.5,95.4L-8.5,98.5L-16.9,106.8ZM9.4,89.1L11.5,88.9L14.9,89.1L15.2,90.8L17.9,89.6L18.9,91.4L20.4,89.4L19.9,86.9L18.6,84.6L15.4,83.3L14.7,82.5L15.7,78.8L13.4,80.4L11.7,84.0L11.0,86.1L9.7,87.9ZM5.9,94.0L7.5,90.6L8.5,93.0L6.7,94.2ZM0.8,91.3L4.8,91.9L3.8,93.0L1.5,92.3ZM0.7,83.3L4.8,84.6L5.4,85.3L2.3,84.8ZM-16.9,41.2L-11.1,43.1L-6.0,45.6L-1.8,47.1L0.2,44.5L-0.2,41.2L-4.4,39.3L-1.0,37.0L1.8,35.4L0.7,32.2L3.2,31.8L5.2,28.9L4.0,26.3L1.5,25.5L-2.7,21.0L-6.0,18.2L-4.4,13.9L-8.5,10.0L-16.9,3.2ZM5.0,163.0L6.7,163.0L6.7,161.7L5.4,162.0Z" fill="#f2efe9" stroke="#f2efe9" stroke-width=".3" stroke-linejoin="round"/>
<path d="M157.3,104.1L155.6,102.6L154.8,101.2L155.4,99.6L156.7,97.3L158.4,94.9L160.2,91.8L161.5,91.6L163.1,92.8L165.0,92.8L163.1,94.6L164.6,94.9L164.7,96.4L165.2,96.8L165.9,96.6L168.0,95.4L169.8,95.2L170.0,94.5L167.3,93.7L167.0,92.7L170.3,91.2L171.6,90.3L173.9,90.1L174.5,90.3L172.8,91.3L172.6,92.9L171.3,94.7L170.2,95.2L171.2,95.7L172.0,96.1L174.1,97.5L175.2,98.7L177.4,100.1L178.5,102.0L178.4,103.1L176.5,104.5L175.2,104.6L173.0,104.8L172.2,104.6L169.5,103.9L169.0,103.0L167.6,102.2L165.2,102.4L163.0,102.9L162.0,103.6L160.6,104.4L159.3,104.1ZM153.4,105.8L154.8,104.7L156.4,104.6L157.3,104.6L158.8,105.2L157.3,105.9L155.6,106.0L154.4,105.9ZM186.9,96.6L188.3,93.7L190.8,92.1L192.4,91.3L194.1,90.8L195.8,90.8L197.5,91.6L197.8,92.3L197.5,94.5L196.6,94.5L194.6,94.7L193.0,96.4L194.4,98.6L194.6,100.1L196.6,101.0L199.7,102.3L200.5,104.1L198.8,105.2L197.3,104.8L197.5,106.8L197.6,108.1L199.0,109.2L199.0,112.6L199.2,113.3L196.6,113.8L194.1,113.7L192.4,112.4L190.8,111.9L190.6,110.2L191.3,108.3L191.6,106.3L193.1,105.9L191.9,105.5L190.9,103.9L189.6,102.2L188.3,100.1L188.3,98.2ZM162.0,181.5L162.3,179.8L164.8,179.3L165.8,179.7L166.9,180.3L165.7,181.5L165.5,182.8L164.5,183.9L163.8,184.3L162.8,184.4L162.0,183.9L161.9,182.2ZM160.5,53.6L161.5,50.6L159.5,49.2L161.5,48.1L163.6,49.5L164.0,51.9L162.6,53.3ZM167.8,50.2L166.5,47.4L167.3,44.5L168.7,45.6L169.3,48.8ZM209.2,93.0L211.7,91.6L211.4,92.8L209.7,93.3ZM206.4,94.2L206.9,93.5L207.2,95.9L206.7,97.8L206.2,96.4ZM231.8,93.5L233.5,91.6L236.8,91.6L241.0,92.3L240.2,93.0L236.0,92.5L233.5,94.0L232.3,94.7ZM157.8,185.7L158.3,188.4L160.0,192.6L160.8,194.6L159.8,194.0L157.8,190.1L157.4,187.2ZM165.7,196.2L166.7,198.5L167.2,201.1L167.7,204.0L166.8,204.2L166.2,201.1L165.7,198.5L165.5,196.8ZM236.3,101.4L238.5,100.6L239.9,101.0L239.0,102.1L237.0,102.0ZM169.0,172.5L169.3,174.1L170.0,175.8L169.3,175.6L168.7,173.6ZM129.5,57.2L131.3,55.9L132.2,57.6L130.5,58.8Z" fill="#aad3df"/>
<path d="M105.0,117.1L105.9,120.4L106.7,122.8L102.7,125.3L99.5,127.5L94.2,129.8L94.2,132.4M94.2,131.7L86.6,131.7M94.2,132.4L94.2,134.9L88.6,134.9L88.6,139.6L86.9,140.4L86.8,143.5L80.2,143.5M94.2,132.4L100.7,136.7L110.7,143.8L111.7,145.3L114.1,146.2L114.2,147.6L115.8,147.3L118.4,146.7L121.3,144.2L128.8,139.5M128.8,139.5L125.3,137.1L125.4,133.8L124.6,126.9L123.9,123.2L121.3,119.8L122.6,116.9L123.1,113.4M124.6,126.9L126.0,124.0L128.0,121.1M150.8,124.2L150.6,128.8L150.6,142.2L150.6,145.8L148.9,145.8L148.9,146.7L135.5,139.6L133.8,140.4L132.5,141.1L128.8,139.5M150.6,142.2L170.5,142.2M100.7,136.7L97.6,136.7L99.3,152.0L99.5,153.7L93.1,153.7L90.8,153.9L89.4,153.5L88.3,154.9L86.3,152.7L84.4,151.8L81.1,152.8M115.8,147.3L115.7,151.3L114.7,153.7L110.4,154.6L109.0,154.6L105.4,156.0L101.5,157.7L99.5,162.5M133.8,140.4L134.7,144.0L134.8,149.3L134.7,151.3L131.3,155.4L131.5,156.8M114.7,160.3L115.6,157.2L118.8,156.8L122.9,158.0L126.3,157.5L131.5,156.8L132.5,159.1L133.2,160.6L134.7,163.2L132.0,163.8L134.7,167.4M132.5,159.1L130.8,163.2L128.6,168.1L125.6,168.4L123.1,172.0M148.9,146.7L148.9,153.4L147.1,153.7L146.4,156.3L145.2,158.6L147.1,161.5L145.0,162.1L140.5,164.9L139.9,166.6L134.7,167.4L133.0,170.1L135.8,176.3M173.4,149.3L170.7,151.1L169.7,154.6L169.8,155.8L172.2,154.8L175.7,155.4L179.7,158.9M169.8,155.8L169.2,158.6L167.5,160.1L166.2,162.1L165.8,164.0L165.5,165.7L164.0,166.7L165.7,168.4L167.8,170.9L168.8,172.3M147.1,161.5L148.1,164.9L149.7,165.2L151.9,162.5L155.6,164.2L158.9,162.7L162.3,159.8L164.3,159.4L164.0,162.8L165.5,164.0M149.7,165.2L154.6,171.4L150.6,171.8L146.4,173.1L141.4,171.4L139.9,174.1L138.5,180.8L135.8,183.4L134.3,187.2L130.5,187.7L129.1,188.4M154.6,171.4L158.1,172.6L160.5,174.1L161.0,176.3L158.8,179.0L158.3,182.3L159.8,181.7L160.3,184.0L157.9,187.4L158.3,190.9L160.3,194.0M160.5,174.1L165.7,173.0L168.8,172.3M180.7,161.5L180.6,161.6L182.4,164.9L187.4,166.6L189.1,166.6L184.1,171.6L179.1,173.3L174.9,174.3L172.5,174.0L169.0,172.5L168.8,172.3M179.1,173.3L177.4,175.3L177.4,181.5L178.4,182.8M165.7,173.0L166.3,173.8L167.3,177.2L165.7,179.7L165.5,181.7L171.8,185.2L174.4,187.9M165.5,181.7L159.8,181.7M167.2,199.6L169.8,199.7L173.2,199.1L176.4,197.7M129.3,190.1L130.5,189.9L136.5,189.9L137.2,192.3L141.4,191.8L145.2,192.3L145.4,196.2L146.1,198.9L148.9,198.4L148.9,202.0L145.6,202.0L145.6,207.5L147.9,210.0M148.9,198.4L151.1,199.2L154.3,199.9L157.3,202.7L158.6,200.6L156.3,200.2L156.6,195.6L160.3,194.0L163.8,195.8L165.7,196.0M128.4,209.3L132.2,209.6L139.5,209.6L147.9,210.0L150.9,210.3M150.9,210.3L147.2,210.7L143.9,211.2L143.9,217.8L142.2,217.8L142.2,222.9L142.2,229.6L137.8,230.2L136.3,230.0M142.2,222.9L143.5,226.6L146.7,224.2L151.4,224.6L153.8,220.9L157.9,218.2L161.1,218.5L162.3,222.3L162.3,226.6L163.8,226.7M150.9,210.3L152.6,213.3L155.1,215.1L157.9,218.2M150.9,210.3L153.9,210.7L157.1,207.2L159.6,206.5L163.8,208.4L164.0,212.4L163.0,216.5L161.1,218.5M159.6,206.5L159.3,205.1L164.3,203.7L164.0,201.1L164.5,198.2L163.8,195.8M164.3,203.7L166.5,204.6L168.8,205.2L167.8,208.6L166.3,207.7L166.2,204.4M127.3,186.5L128.6,186.0L130.1,183.4L132.8,183.7L133.0,181.0L132.0,179.7L133.0,177.7L131.0,176.3M125.1,176.1L127.6,176.3L131.0,176.3L135.8,176.3L139.9,174.1M153.9,231.9L156.4,230.0L157.9,231.6L155.6,233.9L153.9,231.9M88.3,154.9L89.6,159.1L93.6,159.1L95.3,162.8L98.7,162.3L99.5,162.5L104.0,163.8L104.2,166.6L103.3,169.9L103.5,171.4M104.0,161.5L108.7,161.5L109.5,165.7L110.7,169.8M109.0,154.6L110.4,158.0L112.7,159.8L114.7,160.3L113.4,164.9L113.2,169.3M110.2,161.5L111.4,164.9L111.5,169.4M96.1,172.6L94.6,169.1L94.8,167.2L93.0,167.6L91.4,165.7L89.4,168.2M91.4,165.7L90.9,164.4L89.9,163.2L87.8,163.3L86.4,164.9M89.6,159.1L85.8,158.7L85.8,160.3L83.6,161.5M85.8,158.7L80.7,159.2M80.6,157.0L83.6,156.7L85.6,157.3L83.6,157.7L80.6,157.9M166.1,124.8L167.2,128.2M167.3,128.2L168.2,124.4L168.3,122.0L168.7,120.8L170.0,119.0L169.0,118.1M168.7,122.0L170.3,122.8L173.7,120.6L174.4,123.1L170.7,124.4L172.3,126.3L171.5,127.3L169.0,128.8L167.3,128.5M169.0,115.5L170.2,113.6L172.3,113.6L175.7,113.6L179.6,113.0L183.7,112.9M179.6,113.0L177.7,115.3L177.4,118.6L173.7,120.6M183.7,112.9L185.8,115.7L184.7,119.4L185.9,121.4L188.9,123.8L189.1,126.3L190.1,127.4M174.4,123.1L176.4,123.6L179.1,125.1L183.6,128.8L186.6,129.0L188.1,127.1L189.1,127.3M186.6,129.0L188.3,129.2L189.8,130.2M183.7,112.9L182.7,110.5L182.4,108.1L183.7,107.4L181.9,106.6L181.6,104.4L179.9,103.5L178.2,103.5M175.7,99.2L179.9,99.6L183.2,100.8L186.4,102.6L188.8,104.1L190.1,102.8M181.6,104.4L184.1,103.9L186.4,102.6M184.1,103.9L184.9,105.0L186.6,109.2M183.7,107.4L186.6,109.2L189.1,107.7L190.6,110.2M180.4,152.1L181.2,150.2L183.2,150.4L187.4,151.1L189.1,149.0L195.8,147.6L200.8,145.8L202.0,142.2L201.2,140.9L196.8,140.6L195.1,138.2M195.8,147.6L197.6,151.7M201.2,140.9L202.2,138.2L202.5,136.9L203.2,136.9M152.3,105.2L152.9,103.0L155.6,102.3M93.8,102.6L95.0,102.3L97.6,102.6L98.3,103.2L97.1,104.6L97.0,107.4L96.1,107.7L97.0,110.7L96.3,112.8M105.7,99.2L109.9,100.5L114.1,101.4M121.3,98.2L120.4,97.3L119.8,95.2L120.4,93.3L118.9,92.5L118.9,91.6L121.4,89.1L122.4,85.6L119.4,84.3L118.4,84.3L115.7,83.0L113.0,80.1M119.4,84.3L118.9,82.7L118.8,80.9L118.9,78.2L120.4,77.1L120.8,74.1M118.8,80.9L116.7,79.3L114.4,79.3M123.1,69.5L125.3,69.8M132.5,72.4L133.2,76.0L133.8,80.4L129.3,82.2L131.8,86.1L130.5,89.4L124.8,89.4L121.4,89.1M133.8,80.4L137.0,82.0L140.2,84.3L146.6,85.3L148.9,81.4L148.2,77.7L148.7,72.4L148.1,72.1L146.9,71.0L141.9,71.0M148.1,72.1L151.9,71.3L153.3,67.2L155.9,66.0L155.1,62.0L154.6,61.4L154.6,57.2L155.6,55.4M144.0,66.0L148.9,65.4L153.3,67.2M149.4,60.4L152.2,60.7L154.6,61.4M146.9,71.0L146.9,69.2L144.4,68.3M155.9,66.0L160.5,67.5L160.3,69.8L163.5,73.8L162.0,77.4M148.2,78.8L153.9,78.2L160.0,79.6L162.0,77.4L166.3,79.8L168.3,82.0L172.3,83.3L175.9,84.0L175.4,88.4L172.7,90.3M155.3,51.8L158.8,47.4L161.5,43.4L158.9,39.3L158.4,31.4L157.3,24.1L156.4,18.7L160.5,15.9M157.1,18.0L152.2,14.9L150.6,20.1L145.6,18.2L143.2,18.0L148.4,23.3L148.2,31.4L149.2,32.2M143.2,18.0L139.0,20.5L135.5,27.2L133.0,31.0L131.6,37.0L129.0,41.2L129.3,47.8L130.0,50.2L129.6,52.9L128.6,54.6L127.5,57.2M146.6,85.3L145.9,87.1L150.4,88.9L153.3,87.5L155.9,91.6L155.9,94.2L158.4,94.9M153.3,87.5L157.3,88.4L158.9,92.1L158.4,94.9M146.7,97.3L154.4,97.5L156.6,98.5M145.9,87.1L144.2,92.1L142.7,92.8L144.5,95.9L146.7,97.3L146.2,101.7M137.3,88.1L140.2,88.6L143.0,86.9L145.9,87.1M131.8,86.1L133.8,85.6L137.0,86.6L137.3,88.1L135.7,91.3L131.6,91.8L129.1,90.6L126.3,90.8L124.8,90.6M137.0,86.6L140.2,84.3M120.4,93.3L122.9,92.1L124.3,91.8L126.3,90.8M131.6,91.8L131.5,94.0M135.7,91.3L136.3,92.1L140.5,93.3L142.7,92.8M131.5,94.2L134.3,94.2L136.3,92.1M140.5,93.3L141.2,95.7L140.7,97.1L141.5,99.6L139.7,101.2M135.2,94.9L137.2,94.9L140.5,95.7M135.2,94.9L135.8,97.3L138.2,100.1L139.7,101.2M141.5,99.6L142.7,100.5L142.4,101.2L141.2,102.6M142.7,100.5L144.7,101.7L146.2,101.7L147.2,103.9L143.9,105.0L142.2,107.4M142.4,101.2L143.2,102.6L143.9,105.0M147.2,103.9L149.7,103.7L152.9,103.0M190.8,91.8L187.4,87.4L186.6,83.5L189.9,81.4L194.1,78.8L200.0,80.4L206.7,80.4L211.7,79.6L210.9,72.7L217.6,71.0L224.3,68.3L227.6,71.5L231.8,72.1L236.8,71.3L239.2,74.1L242.7,80.9L248.6,80.4L251.9,84.0L254.9,85.1M254.9,85.1L259.4,83.0L263.6,80.9L267.8,83.0L273.4,81.4L274.4,77.4L279.9,79.6L280.1,81.4L286.2,82.2L290.4,84.8L294.6,84.6L299.7,82.5L304.2,83.5M304.2,83.5L306.0,84.3L308.5,82.2L310.9,76.0L311.4,74.1L315.6,73.5L319.8,75.5L322.3,82.5L326.4,85.8L328.1,88.9L334.3,87.1L331.6,95.2L328.6,97.8L328.1,100.1L327.5,101.4M255.8,85.1L256.9,87.6L260.3,89.4L261.1,94.9L268.5,97.3L270.2,100.8L277.9,101.2L284.4,103.2L292.1,101.2L296.0,98.5L296.1,95.4L301.3,94.5L304.0,92.3L309.5,91.3L306.0,88.1L302.7,88.4L304.2,83.5M254.9,85.1L252.4,90.3L247.7,90.1L246.6,94.2L244.0,95.2L243.0,101.9L237.5,104.6L232.3,107.2L232.0,108.1L234.2,110.0L234.2,112.8M234.2,112.8L239.0,116.3L241.0,118.8L240.7,122.4L240.5,124.4L244.4,126.9L247.7,128.6L252.8,131.1L256.3,131.3L257.4,131.1L258.6,130.7L262.3,131.5L263.0,132.1L266.2,129.2L269.5,128.4L271.7,130.7M271.7,130.7L274.0,132.1L273.9,135.2L272.2,138.6L274.4,140.0L275.4,142.2L278.0,142.6L278.2,143.7L279.7,141.5L281.7,140.8L285.1,139.9L287.4,140.9L287.3,142.2L289.6,143.1M234.2,113.2L232.7,118.0L233.5,121.8L235.0,122.8L233.7,125.1L232.5,127.3L230.8,129.4L226.6,131.1L225.1,133.0L226.3,135.4L227.6,137.8L223.9,138.0L222.9,139.1M234.2,113.2L228.6,114.5L228.0,117.8L225.9,121.0L224.8,123.6L219.9,127.3L213.4,128.4L210.7,127.7L212.2,130.0L213.9,132.6L214.6,133.8L211.9,136.4M210.7,127.7L212.2,124.6L210.2,121.4L210.0,119.2L211.2,116.1L211.2,114.0L208.0,112.2L204.5,110.7L201.7,111.1L199.0,112.6M196.6,102.8L199.2,101.7L202.5,103.9L202.5,95.4L206.9,94.0L210.9,96.8L217.4,98.5L219.4,100.1L219.2,102.3L222.6,104.6L227.5,101.9L227.6,101.7L231.8,100.1L235.7,100.3L241.0,100.5L243.0,101.9M202.5,103.9L204.2,103.9L206.9,100.8L209.2,101.9L212.4,104.4L213.4,106.8L216.6,109.1L220.1,112.4M211.2,116.1L213.1,116.9L216.7,114.7L220.1,112.4L222.6,113.2L224.8,113.0L226.3,111.9L228.5,111.1L228.6,113.8L231.5,112.4L234.2,112.8M222.6,104.6L224.3,106.3L226.8,104.8L229.0,103.7L231.0,105.0L228.6,106.3L226.8,106.8L224.8,107.9L221.6,108.5L222.6,113.2M226.8,106.8L232.3,107.2M242.9,129.6L244.4,126.9M242.9,129.6L247.7,132.2L251.1,133.8L256.3,134.1L257.8,134.9L259.1,136.2L263.5,136.7L261.5,138.6L262.0,140.4L263.3,139.1L263.8,143.5M256.3,131.3L256.3,134.1L256.3,137.7L257.8,142.2M258.6,130.7L259.1,133.6L263.0,133.4L263.0,132.1M263.8,143.5L265.0,140.4L267.3,135.8L268.2,133.6L271.7,130.7M278.2,143.7L276.4,145.2L272.9,146.3L272.5,149.3L273.9,152.3L273.2,154.6L274.7,157.5L275.5,160.3L274.0,162.8M276.4,145.2L277.2,146.7L278.2,150.2L279.7,149.0L281.2,148.6L284.1,150.2L284.2,152.3L285.6,153.7L284.9,155.8L281.2,156.0L280.2,157.0L281.1,160.3M279.7,141.5L282.7,144.9L284.4,147.2L285.6,150.0L288.9,154.2L288.8,155.4L288.8,159.1L285.9,160.4L283.7,162.5M284.9,155.8L288.8,155.4M276.4,169.2L278.0,170.4L279.7,169.6M292.3,176.6L293.8,178.6L296.3,177.7L299.7,177.7L301.3,175.1L302.5,172.8L305.7,173.0M344.9,184.4L344.9,195.3M317.1,107.0L319.8,104.6L323.1,103.5L323.6,102.3L326.3,100.1L327.5,101.4M319.9,111.5L323.8,109.8M316.6,195.8L318.2,195.1L318.1,196.0M22.2,173.1L20.6,176.0L17.2,176.1L14.9,176.9L11.5,177.5L8.5,177.8L8.2,171.3L7.0,171.3L1.5,173.3L0.7,177.5L-3.4,178.0M8.2,165.7L5.9,170.0L7.0,171.3M18.2,170.3L17.4,172.1L17.2,176.1M12.9,169.9L12.7,171.3L11.5,173.3L14.1,176.8M11.2,214.6L11.9,218.0L15.4,218.3L17.2,224.2L18.6,227.4L15.2,229.3L12.2,233.1L19.3,240.1M17.2,224.2L12.2,223.8L10.5,227.6L14.9,227.6L17.2,224.2M11.2,214.6L4.3,217.8L3.8,218.3M11.2,214.6L8.2,207.7L7.4,203.3L-0.8,196.3M12.2,233.1L11.2,237.6L10.9,240.6M-4.9,90.3L-7.2,89.4L-8.5,91.3L-11.1,95.4L-16.4,95.4M-4.9,90.3L-4.9,93.7L-3.7,95.2" fill="none" stroke="#b98fb4" stroke-opacity=".42" stroke-width=".6" stroke-linejoin="round"/>
</svg>
<div class="abs" style="left:0;top:0;width:413.5px;height:234.3px;filter:blur(.3px)">
<i class="mk" style="left:-15.4px;top:150.9px;background:rgba(166,166,166,0.82)"></i>
<i class="mk" style="left:2.2px;top:232.8px;background:rgba(0,228,0,0.78)"></i>
<i class="mk" style="left:219.6px;top:71.4px;background:rgba(255,0,0,0.80)"></i>
<i class="mk" style="left:279.1px;top:79.9px;background:rgba(153,0,90,0.80)"></i>
<i class="mk" style="left:130.2px;top:89.4px;background:rgba(0,228,0,0.78)"></i>
<i class="mk" style="left:135.7px;top:92.3px;background:rgba(255,255,0,0.85)"></i>
<i class="mk" style="left:216.0px;top:95.2px;background:rgba(255,126,0,0.80)"></i>
<i class="mk" style="left:225.0px;top:91.7px;background:rgba(153,0,90,0.80)"></i>
<i class="mk" style="left:228.1px;top:90.9px;background:rgba(255,0,0,0.80)"></i>
<i class="mk" style="left:294.6px;top:98.3px;background:rgba(0,228,0,0.78)"></i>
<i class="mk" style="left:307.2px;top:94.3px;background:rgba(255,126,0,0.80)"></i>
<i class="mk" style="left:215.2px;top:101.2px;background:rgba(255,0,0,0.80)"></i>
<i class="mk" style="left:197.8px;top:102.5px;background:rgba(255,255,0,0.85)"></i>
<i class="mk" style="left:105.1px;top:105.0px;background:rgba(255,255,0,0.85)"></i>
<i class="mk" style="left:215.9px;top:109.7px;background:rgba(255,0,0,0.80)"></i>
<i class="mk" style="left:224.5px;top:115.7px;background:rgba(153,0,90,0.80)"></i>
<i class="mk" style="left:222.4px;top:111.3px;background:rgba(255,0,0,0.80)"></i>
<i class="mk" style="left:174.4px;top:112.1px;background:rgba(255,255,0,0.85)"></i>
<i class="mk" style="left:160.5px;top:114.8px;background:rgba(166,166,166,0.82)"></i>
<i class="mk" style="left:303.5px;top:116.2px;background:rgba(255,126,0,0.80)"></i>
<i class="mk" style="left:180.4px;top:119.8px;background:rgba(255,255,0,0.85)"></i>
<i class="mk" style="left:229.3px;top:121.3px;background:rgba(153,0,90,0.80)"></i>
<i class="mk" style="left:242.9px;top:123.0px;background:rgba(255,126,0,0.80)"></i>
<i class="mk" style="left:190.8px;top:130.6px;background:rgba(0,228,0,0.78)"></i>
<i class="mk" style="left:177.7px;top:128.4px;background:rgba(166,166,166,0.82)"></i>
<i class="mk" style="left:184.9px;top:126.0px;background:rgba(255,255,0,0.85)"></i>
<i class="mk" style="left:193.0px;top:127.8px;background:rgba(255,255,0,0.85)"></i>
<i class="mk" style="left:212.2px;top:128.3px;background:rgba(255,0,0,0.80)"></i>
<i class="mk" style="left:248.0px;top:132.5px;background:rgba(255,0,0,0.80)"></i>
<i class="mk" style="left:251.8px;top:130.2px;background:rgba(153,0,90,0.80)"></i>
<i class="mk" style="left:289.9px;top:131.5px;background:rgba(255,126,0,0.80)"></i>
<i class="mk" style="left:165.7px;top:134.4px;background:rgba(255,255,0,0.85)"></i>
<i class="mk" style="left:276.9px;top:135.3px;background:rgba(255,0,0,0.80)"></i>
<i class="mk" style="left:222.1px;top:138.8px;background:rgba(255,126,0,0.80)"></i>
<i class="mk" style="left:260.8px;top:142.7px;background:rgba(255,126,0,0.80)"></i>
<i class="mk" style="left:272.4px;top:140.7px;background:rgba(255,0,0,0.80)"></i>
<i class="mk" style="left:231.7px;top:141.7px;background:rgba(255,126,0,0.80)"></i>
<i class="mk" style="left:154.4px;top:144.8px;background:rgba(192,0,62,0.93)"></i>
<i class="mk" style="left:234.5px;top:149.2px;background:rgba(0,228,0,0.78)"></i>
<i class="mk" style="left:77.1px;top:155.0px;background:rgba(166,166,166,0.82)"></i>
<i class="mk" style="left:86.3px;top:149.3px;background:rgba(255,255,0,0.85)"></i>
<i class="mk" style="left:125.2px;top:150.4px;background:rgba(166,166,166,0.82)"></i>
<i class="mk" style="left:278.7px;top:153.1px;background:rgba(255,255,0,0.85)"></i>
<i class="mk" style="left:164.9px;top:156.2px;background:rgba(255,255,0,0.85)"></i>
<i class="mk" style="left:233.8px;top:159.7px;background:rgba(255,255,0,0.85)"></i>
<i class="mk" style="left:99.7px;top:161.6px;background:rgba(255,255,0,0.85)"></i>
<i class="mk" style="left:93.3px;top:162.2px;background:rgba(166,166,166,0.82)"></i>
<i class="mk" style="left:154.6px;top:169.8px;background:rgba(166,166,166,0.82)"></i>
<i class="mk" style="left:278.9px;top:181.7px;background:rgba(255,255,0,0.85)"></i>
<b class="ml" style="left:272.8px;top:82.7px">277</b>
<b class="ml" style="left:123.8px;top:92.2px">22</b>
<b class="ml" style="left:129.4px;top:95.1px">55</b>
<b class="ml" style="left:209.7px;top:98.0px">142</b>
<b class="ml" style="left:221.8px;top:93.7px">175</b>
<b class="ml" style="left:214.0px;top:93.7px">2</b>
<b class="ml" style="left:288.3px;top:101.1px">40</b>
<b class="ml" style="left:300.9px;top:97.1px">116</b>
<b class="ml" style="left:208.9px;top:104.0px">195</b>
<b class="ml" style="left:191.5px;top:105.3px">67</b>
<b class="ml" style="left:98.8px;top:107.8px">53</b>
<b class="ml" style="left:209.6px;top:112.5px">127</b>
<b class="ml" style="left:218.2px;top:118.5px">212</b>
<b class="ml" style="left:216.1px;top:114.1px">189</b>
<b class="ml" style="left:168.1px;top:114.9px">85</b>
<b class="ml" style="left:154.2px;top:117.6px">N/A</b>
<b class="ml" style="left:297.2px;top:119.0px">121</b>
<b class="ml" style="left:174.1px;top:122.6px">84</b>
<b class="ml" style="left:223.0px;top:124.1px">272</b>
<b class="ml" style="left:236.6px;top:125.8px">118</b>
<b class="ml" style="left:171.4px;top:131.2px">N/A</b>
<b class="ml" style="left:178.6px;top:128.8px">89</b>
<b class="ml" style="left:186.7px;top:130.6px">61</b>
<b class="ml" style="left:205.9px;top:131.1px">157</b>
<b class="ml" style="left:241.7px;top:135.3px">155</b>
<b class="ml" style="left:245.5px;top:133.0px">242</b>
<b class="ml" style="left:283.6px;top:134.3px">121</b>
<b class="ml" style="left:159.4px;top:137.2px">79</b>
<b class="ml" style="left:270.6px;top:138.1px">169</b>
<b class="ml" style="left:215.8px;top:141.6px">131</b>
<b class="ml" style="left:254.5px;top:145.5px">101</b>
<b class="ml" style="left:266.1px;top:143.5px">176</b>
<b class="ml" style="left:225.4px;top:144.5px">101</b>
<b class="ml" style="left:148.1px;top:147.6px">274</b>
<b class="ml" style="left:228.2px;top:152.0px">38</b>
<b class="ml" style="left:70.8px;top:157.8px">N/A</b>
<b class="ml" style="left:80.0px;top:152.1px">95</b>
<b class="ml" style="left:118.9px;top:153.2px">N/A</b>
<b class="ml" style="left:272.4px;top:155.9px">80</b>
<b class="ml" style="left:158.6px;top:159.0px">156</b>
<b class="ml" style="left:227.5px;top:162.5px">55</b>
<b class="ml" style="left:87.0px;top:165.0px">N/A</b>
<b class="ml" style="left:95.0px;top:164.9px">9</b>
<b class="ml" style="left:148.3px;top:172.6px">N/A</b>
<b class="ml" style="left:272.6px;top:184.5px">66</b>
</div>
</div>

<div id="popsh" class="abs"></div>
<svg class="abs" style="left:0;top:0" width="661" height="500" viewBox="0 0 661 500">
<!-- popup -->
<rect x="216.5" y="44.7" width="94.9" height="78.7" rx="6" fill="#fff"/>
<path d="M239.9,123.2 L251.4,123.2 L245.5,128.8Z" fill="#fff"/>
<rect x="225.4" y="80.3" width="77" height="34.1" fill="#03477e"/>
<rect x="226.7" y="96.9" width="47.8" height="16.4" fill="#fff"/>
<rect x="274.5" y="96.9" width="27.1" height="16.7" fill="#99004c"/>
<!-- text cursor -->
<path d="M248.9,54.3 H251.7 M248.9,62 H251.7 M250.3,54.3 V62" stroke="#222" stroke-width=".75" fill="none"/>
<!-- sidebar -->
<rect x="444.1" y="2.45" width="196.3" height="20.05" fill="#03477e"/>
<rect x="444.1" y="57.95" width="196.3" height="19.95" fill="#03477e"/>
<rect x="444.4" y="25.4" width="196.1" height="20" rx="2.5" fill="#000" opacity=".05"/>
<rect x="444.4" y="80.7" width="196.1" height="20" rx="2.5" fill="#000" opacity=".05"/>
<rect x="444.6" y="24.7" width="195.7" height="19.8" rx="2.3" fill="#fff" stroke="#d9d9d9"/>
<rect x="444.6" y="80.0" width="195.7" height="19.8" rx="2.3" fill="#fff" stroke="#d9d9d9"/>
<path d="M629,33.1 h4.6 l-2.3,2.7z M629,88.4 h4.6 l-2.3,2.7z" fill="#8a8a8a"/>
<path d="M618.6,30.4 l4.2,4.6 m0,-4.6 l-4.2,4.6 M618.6,85.7 l4.2,4.6 m0,-4.6 l-4.2,4.6" stroke="#999ea5" stroke-width=".85" fill="none"/>
<rect x="443.7" y="113.5" width="196.5" height="41.3" fill="#fff" stroke="#cdcdcd"/>
<g transform="translate(613.4,128.7) scale(1.03,1.01)">
<rect width="20" height="20" fill="#f0b13f"/>
<circle cx="4.6" cy="15.4" r="2.1" fill="#fff"/>
<path d="M2.6,8.2 A9.2,9.2 0 0 1 11.8,17.4" fill="none" stroke="#fff" stroke-width="2.8"/>
<path d="M2.6,3.6 A13.8,13.8 0 0 1 16.4,17.4" fill="none" stroke="#fff" stroke-width="2.8"/>
</g>
<!-- tabs -->
<path d="M78.1,295.3 V280.8 Q78.1,278.8 80.1,278.8 H172.5 Q174.5,278.8 174.5,280.8 V295.3Z" fill="#d3d3d3" stroke="#c6c6c6"/>
<path d="M177.5,295.3 V280.8 Q177.5,278.8 179.5,278.8 H255.6 Q257.6,278.8 257.6,280.8 V295.3Z" fill="#d3d3d3" stroke="#c6c6c6"/>
<path d="M13,295.3 V280.6 Q13,278.6 15,278.6 H72.9 Q74.9,278.6 74.9,280.6 V295.3Z" fill="#fff" stroke="#b4b4b4"/>
<path d="M12.6,280.4 Q12.7,277.7 15.2,277.7 H72.7 Q75.2,277.7 75.3,280.4 L74.6,279.6 H13.4Z" fill="#03477e"/>
<rect x="14" y="277.7" width="59.9" height="1.8" fill="#03477e"/>
<rect x="12" y="294.8" width="628.5" height="1" fill="#a9a9a9"/>
<!-- current conditions -->
<rect x="493.3" y="325.8" width="146.8" height="171.2" fill="#eee" stroke="#03477e" stroke-width="1.1"/>
<rect x="492.75" y="325.25" width="147.9" height="44.2" fill="#03477e"/>
<rect x="494.0" y="369.4" width="145.3" height="67.8" fill="#99004c"/>
</svg>

<svg class="chart" width="471.0" height="174.5" viewBox="12.0 325.5 471.0 174.5">
<rect x="12.0" y="325.5" width="471.0" height="174.5" fill="#fff"/>
<line x1="56.4" x2="477.5" y1="468.00" y2="468.00" stroke="#e6e6e6" stroke-width="1"/>
<text x="48" y="470.00" text-anchor="end" class="yl">0</text>
<line x1="56.4" x2="477.5" y1="446.65" y2="446.65" stroke="#e6e6e6" stroke-width="1"/>
<text x="48" y="448.65" text-anchor="end" class="yl">100</text>
<line x1="56.4" x2="477.5" y1="425.30" y2="425.30" stroke="#e6e6e6" stroke-width="1"/>
<text x="48" y="427.30" text-anchor="end" class="yl">200</text>
<line x1="56.4" x2="477.5" y1="403.95" y2="403.95" stroke="#e6e6e6" stroke-width="1"/>
<text x="48" y="405.95" text-anchor="end" class="yl">300</text>
<line x1="56.4" x2="477.5" y1="382.60" y2="382.60" stroke="#e6e6e6" stroke-width="1"/>
<text x="48" y="384.60" text-anchor="end" class="yl">400</text>
<line x1="56.4" x2="477.5" y1="361.25" y2="361.25" stroke="#e6e6e6" stroke-width="1"/>
<text x="48" y="363.25" text-anchor="end" class="yl">500</text>
<line x1="56.4" x2="477.5" y1="468.00" y2="468.00" stroke="#c0d0e0" stroke-width="1"/>
<line x1="56.40" x2="56.40" y1="468.00" y2="473.50" stroke="#c0d0e0" stroke-width="1"/>
<line x1="73.95" x2="73.95" y1="468.00" y2="473.50" stroke="#c0d0e0" stroke-width="1"/>
<line x1="91.49" x2="91.49" y1="468.00" y2="473.50" stroke="#c0d0e0" stroke-width="1"/>
<line x1="109.04" x2="109.04" y1="468.00" y2="473.50" stroke="#c0d0e0" stroke-width="1"/>
<line x1="126.58" x2="126.58" y1="468.00" y2="473.50" stroke="#c0d0e0" stroke-width="1"/>
<line x1="144.13" x2="144.13" y1="468.00" y2="473.50" stroke="#c0d0e0" stroke-width="1"/>
<line x1="161.68" x2="161.68" y1="468.00" y2="473.50" stroke="#c0d0e0" stroke-width="1"/>
<line x1="179.22" x2="179.22" y1="468.00" y2="473.50" stroke="#c0d0e0" stroke-width="1"/>
<line x1="196.77" x2="196.77" y1="468.00" y2="473.50" stroke="#c0d0e0" stroke-width="1"/>
<line x1="214.31" x2="214.31" y1="468.00" y2="473.50" stroke="#c0d0e0" stroke-width="1"/>
<line x1="231.86" x2="231.86" y1="468.00" y2="473.50" stroke="#c0d0e0" stroke-width="1"/>
<line x1="249.40" x2="249.40" y1="468.00" y2="473.50" stroke="#c0d0e0" stroke-width="1"/>
<line x1="266.95" x2="266.95" y1="468.00" y2="473.50" stroke="#c0d0e0" stroke-width="1"/>
<line x1="284.50" x2="284.50" y1="468.00" y2="473.50" stroke="#c0d0e0" stroke-width="1"/>
<line x1="302.04" x2="302.04" y1="468.00" y2="473.50" stroke="#c0d0e0" stroke-width="1"/>
<line x1="319.59" x2="319.59" y1="468.00" y2="473.50" stroke="#c0d0e0" stroke-width="1"/>
<line x1="337.13" x2="337.13" y1="468.00" y2="473.50" stroke="#c0d0e0" stroke-width="1"/>
<line x1="354.68" x2="354.68" y1="468.00" y2="473.50" stroke="#c0d0e0" stroke-width="1"/>
<line x1="372.23" x2="372.23" y1="468.00" y2="473.50" stroke="#c0d0e0" stroke-width="1"/>
<line x1="389.77" x2="389.77" y1="468.00" y2="473.50" stroke="#c0d0e0" stroke-width="1"/>
<line x1="407.32" x2="407.32" y1="468.00" y2="473.50" stroke="#c0d0e0" stroke-width="1"/>
<line x1="424.86" x2="424.86" y1="468.00" y2="473.50" stroke="#c0d0e0" stroke-width="1"/>
<line x1="442.41" x2="442.41" y1="468.00" y2="473.50" stroke="#c0d0e0" stroke-width="1"/>
<line x1="459.95" x2="459.95" y1="468.00" y2="473.50" stroke="#c0d0e0" stroke-width="1"/>
<line x1="477.50" x2="477.50" y1="468.00" y2="473.50" stroke="#c0d0e0" stroke-width="1"/>
<rect x="61.07" y="424.23" width="8.8" height="43.77" fill="#99004C" stroke="#500028" stroke-width="0.9"/>
<rect x="78.62" y="428.93" width="8.8" height="39.07" fill="#FF0000" stroke="#8a1010" stroke-width="0.9"/>
<rect x="96.16" y="432.13" width="8.8" height="35.87" fill="#FF0000" stroke="#8a1010" stroke-width="0.9"/>
<rect x="113.71" y="434.91" width="8.8" height="33.09" fill="#FF0000" stroke="#8a1010" stroke-width="0.9"/>
<rect x="131.26" y="436.62" width="8.8" height="31.38" fill="#FF7E00" stroke="#8a4a10" stroke-width="0.9"/>
<rect x="148.80" y="446.44" width="8.8" height="21.56" fill="#FF7E00" stroke="#8a4a10" stroke-width="0.9"/>
<rect x="166.35" y="451.13" width="8.8" height="16.87" fill="#FFFF00" stroke="#8a8a20" stroke-width="0.9"/>
<rect x="183.89" y="452.41" width="8.8" height="15.59" fill="#FFFF00" stroke="#8a8a20" stroke-width="0.9"/>
<rect x="201.44" y="454.34" width="8.8" height="13.66" fill="#FFFF00" stroke="#8a8a20" stroke-width="0.9"/>
<rect x="218.99" y="447.50" width="8.8" height="20.50" fill="#FFFF00" stroke="#8a8a20" stroke-width="0.9"/>
<rect x="236.53" y="449.43" width="8.8" height="18.57" fill="#FFFF00" stroke="#8a8a20" stroke-width="0.9"/>
<rect x="254.08" y="449.43" width="8.8" height="18.57" fill="#FFFF00" stroke="#8a8a20" stroke-width="0.9"/>
<rect x="271.62" y="446.44" width="8.8" height="21.56" fill="#FF7E00" stroke="#8a4a10" stroke-width="0.9"/>
<rect x="289.17" y="439.39" width="8.8" height="28.61" fill="#FF7E00" stroke="#8a4a10" stroke-width="0.9"/>
<rect x="306.71" y="435.33" width="8.8" height="32.67" fill="#FF0000" stroke="#8a1010" stroke-width="0.9"/>
<rect x="324.26" y="434.05" width="8.8" height="33.95" fill="#FF0000" stroke="#8a1010" stroke-width="0.9"/>
<rect x="341.81" y="432.35" width="8.8" height="35.65" fill="#FF0000" stroke="#8a1010" stroke-width="0.9"/>
<rect x="359.35" y="429.57" width="8.8" height="38.43" fill="#FF0000" stroke="#8a1010" stroke-width="0.9"/>
<rect x="376.90" y="427.01" width="8.8" height="40.99" fill="#FF0000" stroke="#8a1010" stroke-width="0.9"/>
<rect x="394.44" y="424.23" width="8.8" height="43.77" fill="#99004C" stroke="#500028" stroke-width="0.9"/>
<rect x="411.99" y="421.67" width="8.8" height="46.33" fill="#99004C" stroke="#500028" stroke-width="0.9"/>
<rect x="429.54" y="419.54" width="8.8" height="48.46" fill="#99004C" stroke="#500028" stroke-width="0.9"/>
<rect x="447.08" y="418.04" width="8.8" height="49.96" fill="#99004C" stroke="#500028" stroke-width="0.9"/>
<rect x="464.63" y="415.91" width="8.8" height="52.09" fill="#99004C" stroke="#500028" stroke-width="0.9"/>
<text transform="translate(67.37,477.30) rotate(-45)" text-anchor="end" class="xl">8 PM</text>
<text transform="translate(84.92,477.30) rotate(-45)" text-anchor="end" class="xl">9 PM</text>
<text transform="translate(102.46,477.30) rotate(-45)" text-anchor="end" class="xl">10 PM</text>
<text transform="translate(120.01,477.30) rotate(-45)" text-anchor="end" class="xl">11 PM</text>
<text transform="translate(137.56,477.30) rotate(-45)" text-anchor="end" class="xl">Dec 7, 2020 12 AM</text>
<text transform="translate(155.10,477.30) rotate(-45)" text-anchor="end" class="xl">1 AM</text>
<text transform="translate(172.65,477.30) rotate(-45)" text-anchor="end" class="xl">2 AM</text>
<text transform="translate(190.19,477.30) rotate(-45)" text-anchor="end" class="xl">3 AM</text>
<text transform="translate(207.74,477.30) rotate(-45)" text-anchor="end" class="xl">4 AM</text>
<text transform="translate(225.29,477.30) rotate(-45)" text-anchor="end" class="xl">5 AM</text>
<text transform="translate(242.83,477.30) rotate(-45)" text-anchor="end" class="xl">6 AM</text>
<text transform="translate(260.38,477.30) rotate(-45)" text-anchor="end" class="xl">7 AM</text>
<text transform="translate(277.92,477.30) rotate(-45)" text-anchor="end" class="xl">8 AM</text>
<text transform="translate(295.47,477.30) rotate(-45)" text-anchor="end" class="xl">9 AM</text>
<text transform="translate(313.01,477.30) rotate(-45)" text-anchor="end" class="xl">10 AM</text>
<text transform="translate(330.56,477.30) rotate(-45)" text-anchor="end" class="xl">11 AM</text>
<text transform="translate(348.11,477.30) rotate(-45)" text-anchor="end" class="xl">12 PM</text>
<text transform="translate(365.65,477.30) rotate(-45)" text-anchor="end" class="xl">1 PM</text>
<text transform="translate(383.20,477.30) rotate(-45)" text-anchor="end" class="xl">2 PM</text>
<text transform="translate(400.74,477.30) rotate(-45)" text-anchor="end" class="xl">3 PM</text>
<text transform="translate(418.29,477.30) rotate(-45)" text-anchor="end" class="xl">4 PM</text>
<text transform="translate(435.84,477.30) rotate(-45)" text-anchor="end" class="xl">5 PM</text>
<text transform="translate(453.38,477.30) rotate(-45)" text-anchor="end" class="xl">6 PM</text>
<text transform="translate(470.93,477.30) rotate(-45)" text-anchor="end" class="xl">7 PM</text>
<text transform="translate(29.6,411.5) rotate(-90)" text-anchor="middle" class="yt">AQI</text>
</svg>


<svg class="abs txt" style="left:0;top:0" width="661" height="500" viewBox="0 0 661 500">
<text x="50.90" y="18.30" font-size="11.70" fill="#fff" textLength="146.00" lengthAdjust="spacingAndGlyphs" stroke="#fff" stroke-width="0.32">AirNow Department of State</text>
<text x="446.80" y="15.30" font-size="8.80" fill="#fff" textLength="46.00" lengthAdjust="spacingAndGlyphs" stroke="#fff" stroke-width="0.30">Select a City</text>
<text x="446.80" y="71.20" font-size="8.80" fill="#fff" textLength="70.50" lengthAdjust="spacingAndGlyphs" stroke="#fff" stroke-width="0.30">Select a Parameter</text>
<text x="449.80" y="37.00" font-size="8.40" fill="#444" textLength="28.99" lengthAdjust="spacingAndGlyphs">Bishkek</text>
<text x="449.80" y="92.40" font-size="8.40" fill="#444" textLength="23.30" lengthAdjust="spacingAndGlyphs">PM2.5</text>
<text x="449.90" y="126.80" font-size="8.60" fill="#444" textLength="30.89" lengthAdjust="spacingAndGlyphs" stroke="#444" stroke-width="0.38">Bishkek</text>
<text x="443.00" y="170.00" font-size="6.35" fill="#6e6e6e" textLength="182.38" lengthAdjust="spacingAndGlyphs">Note: Values above 500 are considered Beyond the AQI. Follow</text>
<text x="443.00" y="181.60" font-size="6.35" fill="#6e6e6e" textLength="195.70" lengthAdjust="spacingAndGlyphs">recommendations for the Hazardous category. Additional information</text>
<text x="443.00" y="193.10" font-size="6.35" fill="#6e6e6e" textLength="193.20" lengthAdjust="spacingAndGlyphs">on reducing exposure to extremely high levels of particle pollution is</text>
<text x="443.00" y="204.70" font-size="6.35" fill="#6e6e6e" textLength="25.60" lengthAdjust="spacingAndGlyphs">available</text>
<text x="470.30" y="204.70" font-size="6.35" font-weight="bold" fill="#1c2b3a" textLength="12.90" lengthAdjust="spacingAndGlyphs" text-decoration="underline">here</text>
<text x="484.00" y="204.70" font-size="6.35" fill="#6e6e6e" textLength="0.90" lengthAdjust="spacingAndGlyphs">.</text>
<text x="37.10" y="290.60" font-size="8.30" fill="#333" textLength="13.80" lengthAdjust="spacingAndGlyphs">AQI</text>
<text x="100.75" y="290.70" font-size="8.30" fill="#6e6e6e" textLength="51.00" lengthAdjust="spacingAndGlyphs">Concentration</text>
<text x="200.75" y="290.70" font-size="8.30" fill="#6e6e6e" textLength="34.25" lengthAdjust="spacingAndGlyphs">Historical</text>
<text x="13.00" y="311.00" font-size="8.50" fill="#333" textLength="279.60" lengthAdjust="spacingAndGlyphs">Learn more about how the Air Quality Index [AQI] is calculated from the EPA</text>
<text x="294.90" y="311.00" font-size="8.50" font-weight="bold" fill="#1c2b3a" textLength="14.10" lengthAdjust="spacingAndGlyphs" text-decoration="underline">here</text>
<text x="310.00" y="311.00" font-size="8.50" fill="#333" textLength="1.00" lengthAdjust="spacingAndGlyphs">.</text>
<text x="206.60" y="339.50" font-size="10.90" fill="#333" textLength="82.90" lengthAdjust="spacingAndGlyphs">Bishkek - PM2.5</text>
<text x="526.30" y="337.70" font-size="9.30" font-weight="bold" fill="#fff" textLength="80.20" lengthAdjust="spacingAndGlyphs">Current Conditions</text>
<text x="547.00" y="349.40" font-size="7.00" font-weight="bold" fill="#fff" textLength="39.40" lengthAdjust="spacingAndGlyphs">observed at</text>
<text x="515.80" y="362.30" font-size="9.10" font-weight="bold" fill="#fff" textLength="102.00" lengthAdjust="spacingAndGlyphs">Dec 7, 2020 7:00 PM (LT)</text>
<text x="544.60" y="391.00" font-size="12.40" font-weight="bold" fill="#fff" textLength="43.20" lengthAdjust="spacingAndGlyphs">244 AQI</text>
<text x="524.50" y="407.20" font-size="12.20" font-weight="bold" fill="#fff" textLength="83.90" lengthAdjust="spacingAndGlyphs">Very Unhealthy</text>
<text x="549.80" y="423.80" font-size="12.20" font-weight="bold" fill="#fff" textLength="33.50" lengthAdjust="spacingAndGlyphs">PM2.5</text>
<text x="539.90" y="449.60" font-size="7.50" font-weight="bold" fill="#222" textLength="52.80" lengthAdjust="spacingAndGlyphs">Health Message</text>
<text x="496.30" y="463.40" font-size="7.05" fill="#555" textLength="131.99" lengthAdjust="spacingAndGlyphs">AQI values between 201 and 300 trigger a</text>
<text x="496.30" y="475.90" font-size="7.05" fill="#555" textLength="112.10" lengthAdjust="spacingAndGlyphs">health alert, meaning everyone may</text>
<text x="496.30" y="488.00" font-size="7.05" fill="#555" textLength="122.70" lengthAdjust="spacingAndGlyphs">experience more serious health effects.</text>
<text x="250.50" y="60.90" font-size="8.40" fill="#333" textLength="27.29" lengthAdjust="spacingAndGlyphs">Bishkek</text>
<text x="226.30" y="69.70" font-size="8.40" fill="#333" textLength="74.60" lengthAdjust="spacingAndGlyphs">2020-12-07 7:00 PM</text>
<text x="256.60" y="78.30" font-size="8.40" fill="#333" textLength="14.40" lengthAdjust="spacingAndGlyphs">(LT)</text>
<text x="232.40" y="90.90" font-size="8.50" font-weight="bold" fill="#fff" textLength="35.10" lengthAdjust="spacingAndGlyphs">Pollutant</text>
<text x="281.10" y="90.90" font-size="8.50" font-weight="bold" fill="#fff" textLength="13.60" lengthAdjust="spacingAndGlyphs">AQI</text>
<text x="238.40" y="107.20" font-size="8.40" fill="#444" textLength="23.50" lengthAdjust="spacingAndGlyphs">PM2.5</text>
<text x="281.10" y="107.20" font-size="8.50" font-weight="bold" fill="#fff" textLength="13.30" lengthAdjust="spacingAndGlyphs">244</text>
</svg>
</body></html>
